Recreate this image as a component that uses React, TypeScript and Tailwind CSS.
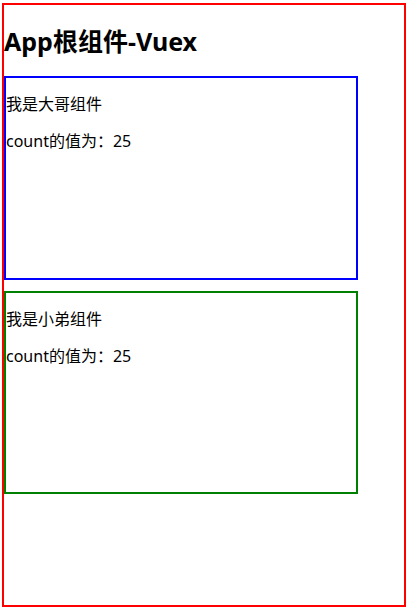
import React from 'react';

const font = { fontFamily: '"Noto Sans", "Noto Sans CJK SC", sans-serif' };

function Card({ color, title, count, className }: { color: string; title: string; count: number; className?: string }) {
    return (
        <div className={`w-[354px] border-2 ${color} ${className ?? ''}`}>
            <p className="my-4 text-[16px] leading-[21px] text-black">{title}</p>
            <p className="my-4 text-[16px] leading-[21px] text-black">count的值为：{count}</p>
        </div>
    );
}

export default function App() {
    const count = 25;
    return (
        <div className="bg-white w-[409px] h-[616px] pt-[3px]" style={font}>
            <div className="ml-[2px] w-[404px] h-[604px] border-2 border-[#ff0000]">
                <h2 className="mt-[20px] mb-[19px] text-[25px] leading-[32px] font-bold text-black">App根组件-Vuex</h2>
                <Card color="border-[#0000ff] h-[204px]" title="我是大哥组件" count={count} />
                <Card color="border-[#008000] h-[203px]" title="我是小弟组件" count={count} className="mt-[11px]" />
            </div>
        </div>
    );
}
